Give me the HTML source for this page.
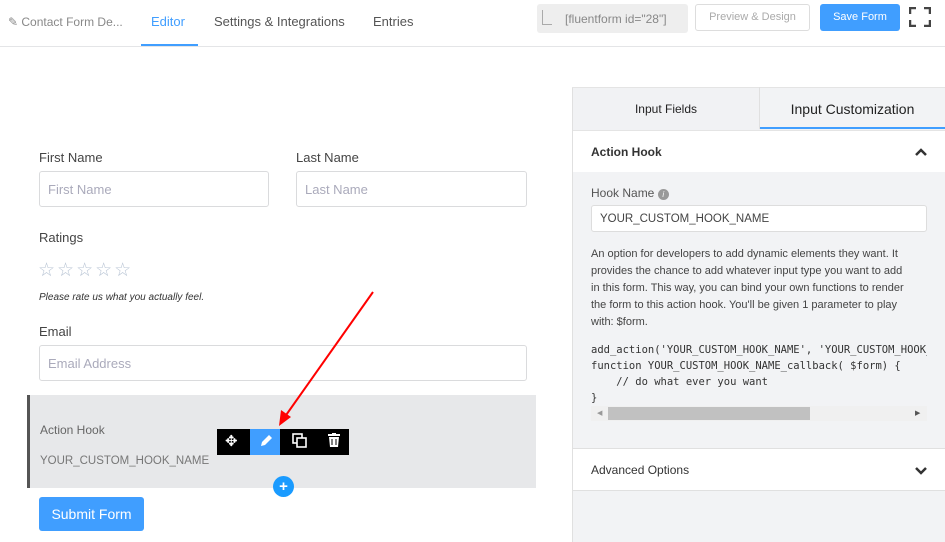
<!DOCTYPE html>
<html><head><meta charset="utf-8"><style>
*{box-sizing:border-box;margin:0;padding:0}
body{width:945px;height:542px;overflow:hidden;background:#fff;font-family:"Liberation Sans",sans-serif;position:relative;color:#1e1f21}
.a{position:absolute}
.lbl{font-size:13px;color:#444}
.inp{border:1px solid #dadbdd;border-radius:3px;height:36px;font-size:13px;color:#aab;padding:10px 8px;background:#fff}
.mono{font-family:"DejaVu Sans Mono","Liberation Mono",monospace;font-size:10.5px;color:#333;white-space:pre;line-height:16px}
</style></head><body>
<div class="a" style="left:0;top:46px;width:945px;height:1px;background:#e4e5e7"></div>
<div class="a" style="left:8px;top:15px;font-size:12px;color:#888">✎ Contact Form De...</div>
<div class="a" style="left:151px;top:14px;font-size:13px;color:#409eff">Editor</div>
<div class="a" style="left:141px;top:44px;width:57px;height:2px;background:#409eff"></div>
<div class="a" style="left:214px;top:14px;font-size:13px;color:#555">Settings &amp; Integrations</div>
<div class="a" style="left:373px;top:14px;font-size:13px;color:#555">Entries</div>
<div class="a" style="left:537px;top:4px;width:151px;height:29px;background:#eee;border-radius:3px;font-size:12px;color:#888;padding:8px 0 0 28px">[fluentform id="28"]</div>
<div class="a" style="left:542px;top:10px;width:10px;height:15px;border-left:1px solid #aaa;border-bottom:1px solid #aaa"></div>
<div class="a" style="left:695px;top:4px;width:115px;height:27px;border:1px solid #ddd;border-radius:3px;font-size:11px;color:#aaa;text-align:center;line-height:25px">Preview &amp; Design</div>
<div class="a" style="left:820px;top:4px;width:80px;height:27px;background:#409eff;border-radius:3px;font-size:11px;color:#fff;text-align:center;line-height:27px">Save Form</div>
<svg class="a" style="left:909px;top:7px" width="22" height="20" fill="none" stroke="#444" stroke-width="2.5"><path d="M1 7V1h6M15 1h6v6M21 13v6h-6M7 19H1v-6"/></svg>

<div class="a lbl" style="left:39px;top:150px">First Name</div>
<div class="a inp" style="left:39px;top:171px;width:230px">First Name</div>
<div class="a lbl" style="left:296px;top:150px">Last Name</div>
<div class="a inp" style="left:296px;top:171px;width:231px">Last Name</div>
<div class="a lbl" style="left:39px;top:230px">Ratings</div>
<div class="a" style="left:38px;top:259px;font-size:19px;color:#b8c4d4;letter-spacing:2px">☆☆☆☆☆</div>
<div class="a" style="left:39px;top:292px;font-size:10px;font-style:italic;color:#333">Please rate us what you actually feel.</div>
<div class="a lbl" style="left:39px;top:324px">Email</div>
<div class="a inp" style="left:39px;top:345px;width:488px">Email Address</div>

<div class="a" style="left:27px;top:395px;width:509px;height:93px;background:#e7e8ea;border-left:3px solid #555"></div>
<div class="a" style="left:40px;top:423px;font-size:12px;color:#666">Action Hook</div>
<div class="a" style="left:40px;top:455px;font-size:11.5px;color:#777">YOUR_CUSTOM_HOOK_NAME</div>
<div class="a" style="left:217px;top:429px;width:132px;height:26px;background:#000"></div>
<div class="a" style="left:250px;top:429px;width:30px;height:26px;background:#409eff"></div>
<div class="a" style="left:225px;top:432px;color:#fff;font-size:15px">✥</div>
<svg class="a" style="left:259px;top:434px" width="14" height="14"><path d="M2 12l1-4 7-7 3 3-7 7z" fill="#fff"/></svg>
<svg class="a" style="left:292px;top:433px" width="16" height="16" fill="none" stroke="#fff" stroke-width="1.6"><rect x="1" y="1" width="9" height="9"/><rect x="5" y="5" width="9" height="9" fill="#000"/></svg>
<svg class="a" style="left:328px;top:433px" width="12" height="14" fill="#fff"><rect x="0" y="1" width="12" height="2"/><rect x="4" y="0" width="4" height="2"/><path d="M1 4h10l-1 10H2z"/><rect x="3.5" y="6" width="1" height="6" fill="#000"/><rect x="7.5" y="6" width="1" height="6" fill="#000"/></svg>
<div class="a" style="left:273px;top:476px;width:21px;height:21px;border-radius:50%;background:#1a9bff;color:#fff;font-size:15px;font-weight:bold;text-align:center;line-height:21px">+</div>
<div class="a" style="left:39px;top:497px;width:105px;height:34px;background:#409eff;border-radius:3px;color:#fff;font-size:14px;text-align:center;line-height:34px">Submit Form</div>
<svg class="a" style="left:270px;top:288px" width="110" height="145"><line x1="103" y1="4" x2="14" y2="130" stroke="#f00" stroke-width="2"/><path d="M9 138l2-16 10 7z" fill="#f00"/></svg>

<div class="a" style="left:572px;top:87px;width:373px;height:455px;background:#f2f3f5;border-left:1px solid #e0e0e0"></div>
<div class="a" style="left:573px;top:88px;width:186px;height:42px;background:#f1f2f4"></div>
<div class="a" style="left:572px;top:87px;width:373px;height:1px;background:#e4e4e4"></div>
<div class="a" style="left:759px;top:87px;width:1px;height:42px;background:#e0e0e0"></div>
<div class="a" style="left:573px;top:102px;width:186px;text-align:center;font-size:12px;color:#222">Input Fields</div>
<div class="a" style="left:760px;top:101px;width:185px;text-align:center;font-size:14px;color:#222">Input Customization</div>
<div class="a" style="left:760px;top:127px;width:185px;height:2px;background:#409eff"></div>
<div class="a" style="left:573px;top:130px;width:372px;height:42px;background:#fff;border-top:1px solid #e4e4e4"></div>
<div class="a" style="left:591px;top:145px;font-size:12px;font-weight:bold;color:#333">Action Hook</div>
<svg class="a" style="left:915px;top:148px" width="12" height="9"><path d="M1 7l5-5 5 5" stroke="#333" stroke-width="2.5" fill="none"/></svg>
<div class="a" style="left:591px;top:186px;font-size:12px;color:#555">Hook Name <span style="display:inline-block;width:11px;height:11px;border-radius:50%;background:#999;color:#fff;font-size:8px;text-align:center;line-height:11px;font-style:italic">i</span></div>
<div class="a" style="left:591px;top:205px;width:336px;height:27px;background:#fff;border:1px solid #ddd;border-radius:3px;font-size:11.5px;color:#444;padding:7px 8px">YOUR_CUSTOM_HOOK_NAME</div>
<div class="a" style="left:591px;top:246px;font-size:11px;line-height:17px;color:#444;white-space:nowrap">An option for developers to add dynamic elements they want. It<br>provides the chance to add whatever input type you want to add<br>in this form. This way, you can bind your own functions to render<br>the form to this action hook. You'll be given 1 parameter to play<br>with: $form.</div>
<div class="a" style="left:591px;top:342px;width:336px;height:64px;overflow:hidden">
<div class="mono">add_action('YOUR_CUSTOM_HOOK_NAME', 'YOUR_CUSTOM_HOOK_NAME_callback');
function YOUR_CUSTOM_HOOK_NAME_callback( $form) {
    // do what ever you want
}</div></div>
<div class="a" style="left:591px;top:406px;width:336px;height:15px;background:#f0f0f0"></div>
<div class="a" style="left:608px;top:407px;width:202px;height:13px;background:#c1c1c1"></div>
<div class="a" style="left:597px;top:409px;font-size:7px;color:#999">◀</div>
<div class="a" style="left:915px;top:409px;font-size:7px;color:#555">▶</div>
<div class="a" style="left:573px;top:448px;width:372px;height:43px;background:#fff;border-top:1px solid #e0e0e0;border-bottom:1px solid #e0e0e0"></div>
<div class="a" style="left:591px;top:463px;font-size:12px;color:#333">Advanced Options</div>
<svg class="a" style="left:915px;top:466px" width="12" height="9"><path d="M1 2l5 5 5-5" stroke="#333" stroke-width="2.5" fill="none"/></svg>
</body></html>
